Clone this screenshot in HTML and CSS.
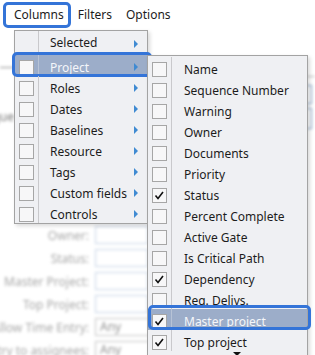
FILE: index.html
```html
<!DOCTYPE html>
<html>
<head>
    <title>Columns menu</title>
    <link rel="stylesheet" href="styles.css">
</head>
<body>
    <div class="menubar">
        <span class="menubar-item is-open">Columns</span>
        <span class="menubar-item">Filters</span>
        <span class="menubar-item">Options</span>
    </div>

    <div class="backdrop">
        <div class="backdrop-top">
            <div class="bg-left">
                <div class="bg-rule"></div>
                <div class="bg-label">Unique</div>
            </div>
            <div class="bg-right">
                <div class="bg-rule bg-rule-right"></div>
                <div class="bg-box"></div>
                <div class="bg-box bg-box-tall"></div>
            </div>
        </div>
        <div class="form">
            <div class="form-row"><label>Owner:</label><span class="field"></span></div>
            <div class="form-row"><label>Status:</label><span class="field"></span></div>
            <div class="form-row"><label>Master Project:</label><span class="field"></span></div>
            <div class="form-row"><label>Top Project:</label><span class="field"></span></div>
            <div class="form-row"><label>Allow Time Entry:</label><span class="field field-select">Any</span></div>
            <div class="form-row"><label>Restrict entry to assignees:</label><span class="field field-select">Any</span></div>
        </div>
    </div>

    <div class="menu menu-main">
        <div class="menu-row menu-row-first">
            <span class="menu-gutter"></span>
            <span class="menu-label">Selected</span>
            <span class="menu-arrow"></span>
        </div>
        <div class="menu-row is-active">
            <span class="menu-gutter"><span class="check"></span></span>
            <span class="menu-label">Project</span>
            <span class="menu-arrow"></span>
        </div>
        <div class="menu-row">
            <span class="menu-gutter"><span class="check"></span></span>
            <span class="menu-label">Roles</span>
            <span class="menu-arrow"></span>
        </div>
        <div class="menu-row">
            <span class="menu-gutter"><span class="check"></span></span>
            <span class="menu-label">Dates</span>
            <span class="menu-arrow"></span>
        </div>
        <div class="menu-row">
            <span class="menu-gutter"><span class="check"></span></span>
            <span class="menu-label">Baselines</span>
            <span class="menu-arrow"></span>
        </div>
        <div class="menu-row">
            <span class="menu-gutter"><span class="check"></span></span>
            <span class="menu-label">Resource</span>
            <span class="menu-arrow"></span>
        </div>
        <div class="menu-row">
            <span class="menu-gutter"><span class="check"></span></span>
            <span class="menu-label">Tags</span>
            <span class="menu-arrow"></span>
        </div>
        <div class="menu-row">
            <span class="menu-gutter"><span class="check"></span></span>
            <span class="menu-label">Custom fields</span>
            <span class="menu-arrow"></span>
        </div>
        <div class="menu-row">
            <span class="menu-gutter"><span class="check"></span></span>
            <span class="menu-label">Controls</span>
            <span class="menu-arrow"></span>
        </div>
    </div>

    <div class="menu menu-sub">
        <div class="menu-row">
            <span class="menu-gutter"><span class="check"></span></span>
            <span class="menu-label">Name</span>
        </div>
        <div class="menu-row">
            <span class="menu-gutter"><span class="check"></span></span>
            <span class="menu-label">Sequence Number</span>
        </div>
        <div class="menu-row">
            <span class="menu-gutter"><span class="check"></span></span>
            <span class="menu-label">Warning</span>
        </div>
        <div class="menu-row">
            <span class="menu-gutter"><span class="check"></span></span>
            <span class="menu-label">Owner</span>
        </div>
        <div class="menu-row">
            <span class="menu-gutter"><span class="check"></span></span>
            <span class="menu-label">Documents</span>
        </div>
        <div class="menu-row">
            <span class="menu-gutter"><span class="check"></span></span>
            <span class="menu-label">Priority</span>
        </div>
        <div class="menu-row">
            <span class="menu-gutter"><span class="check is-checked"><svg viewBox="0 0 13 13"><polyline points="2.5,6.5 5,9.5 10,3"/></svg></span></span>
            <span class="menu-label">Status</span>
        </div>
        <div class="menu-row">
            <span class="menu-gutter"><span class="check"></span></span>
            <span class="menu-label">Percent Complete</span>
        </div>
        <div class="menu-row">
            <span class="menu-gutter"><span class="check"></span></span>
            <span class="menu-label">Active Gate</span>
        </div>
        <div class="menu-row">
            <span class="menu-gutter"><span class="check"></span></span>
            <span class="menu-label">Is Critical Path</span>
        </div>
        <div class="menu-row">
            <span class="menu-gutter"><span class="check is-checked"><svg viewBox="0 0 13 13"><polyline points="2.5,6.5 5,9.5 10,3"/></svg></span></span>
            <span class="menu-label">Dependency</span>
        </div>
        <div class="menu-row">
            <span class="menu-gutter"><span class="check"></span></span>
            <span class="menu-label">Req. Delivs.</span>
        </div>
        <div class="menu-row is-active">
            <span class="menu-gutter"><span class="check is-checked"><svg viewBox="0 0 13 13"><polyline points="2.5,6.5 5,9.5 10,3"/></svg></span></span>
            <span class="menu-label">Master project</span>
        </div>
        <div class="menu-row">
            <span class="menu-gutter"><span class="check is-checked"><svg viewBox="0 0 13 13"><polyline points="2.5,6.5 5,9.5 10,3"/></svg></span></span>
            <span class="menu-label">Top project</span>
        </div>
        <div class="menu-scroll"><span class="scroll-arrow"></span></div>
    </div>
</body>
</html>
```

FILE: styles.css
```css
body {
    margin: 0;
    height: 355px;
    overflow: hidden;
    position: relative;
    font-family: "Noto Sans", "Open Sans", sans-serif;
    font-size: 12px;
    color: #1c1c1c;
    background: #fff;
}

/* top menu bar */
.menubar {
    display: flex;
    height: 28px;
    padding: 2px 0 0 3px;
    box-sizing: border-box;
}
.menubar-item {
    padding: 0 4px;
    border: 3px solid transparent;
    border-radius: 5px;
    line-height: 19px;
}
.menubar-item.is-open {
    padding-left: 8px;
    border-color: #3474d8;
}

/* blurred form behind the menus */
.backdrop {
    filter: blur(1.4px);
    color: #a8a8a8;
}
.backdrop-top {
    display: flex;
    justify-content: space-between;
    height: 198px;
}
.bg-left {
    width: 14px;
}
.bg-rule {
    height: 1px;
    margin-top: 39px;
    background: #8c8c8c;
}
.bg-label {
    display: flex;
    justify-content: flex-end;
    margin-top: 40px;
    color: #777;
    white-space: nowrap;
}
.bg-right {
    width: 15px;
}
.bg-rule-right {
    margin-top: 48px;
    background: #b5b5b5;
}
.bg-box {
    width: 10px;
    height: 17px;
    margin-top: 8px;
    border: 1px solid #7f9fc4;
}
.bg-box-tall {
    height: 19px;
    margin-top: 4px;
}
.form {
    display: flex;
    flex-direction: column;
    gap: 5px;
}
.form-row {
    display: flex;
    align-items: center;
    height: 18px;
}
.form-row label {
    display: flex;
    justify-content: flex-end;
    width: 89px;
    margin-right: 6px;
    white-space: nowrap;
}
.field {
    width: 51px;
    height: 16px;
    border: 1px solid #c6d4e6;
    background: #fff;
}
.field-select {
    border-color: #c4c4c4;
    padding-left: 4px;
    line-height: 16px;
    color: #909090;
}

/* drop-down menus */
.menu {
    position: absolute;
    background: #eff0f3;
    border: 1px solid #a3a3a3;
    box-shadow: 2px 2px 4px rgba(0, 0, 0, 0.15);
}
.menu-main {
    left: 14px;
    top: 30px;
    width: 132px;
    height: 192px;
}
.menu-sub {
    left: 147px;
    top: 55px;
    width: 159px;
    padding-top: 1px;
}
.menu-row {
    position: relative;
    display: flex;
    height: 21px;
}
.menu-row-first {
    height: 24px;
}
.menu-row-first .menu-label {
    padding-top: 2px;
}
.menu-gutter {
    width: 24px;
    padding: 5px 0 0 4px;
    box-sizing: border-box;
    border-right: 1px solid #c9c9cc;
}
.menu-label {
    flex: 1;
    padding: 3px 0 0 11px;
    line-height: 19px;
    white-space: nowrap;
}
.menu-sub .menu-label {
    padding-left: 12px;
}
.menu-arrow {
    width: 0;
    height: 0;
    margin: 8px 9px 0 0;
    border-left: 4px solid #3f8ad2;
    border-top: 4px solid transparent;
    border-bottom: 4px solid transparent;
}
.menu-row-first .menu-arrow {
    margin-top: 9px;
}
.check {
    display: block;
    width: 13px;
    height: 13px;
    border: 1px solid #a6a6a6;
    background: #f7f7f8;
}
.check svg {
    display: block;
    width: 13px;
    height: 13px;
    fill: none;
    stroke: #111;
    stroke-width: 1.6;
}
.menu-row.is-active {
    background: #9cadc9;
    color: #f4f6fa;
}
.menu-row.is-active .menu-gutter {
    border-right-color: #b7c3d6;
}
.menu-row.is-active::after {
    content: "";
    position: absolute;
    top: -3px;
    left: -3px;
    right: -5px;
    height: 25px;
    box-sizing: border-box;
    border: 3px solid #3474d8;
    border-radius: 5px;
}
.menu-sub .menu-row.is-active::after {
    left: 0;
    right: -4px;
    top: -4px;
}
.menu-scroll {
    height: 12px;
    padding: 1px 0 0 85px;
}
.scroll-arrow {
    display: block;
    width: 0;
    height: 0;
    border-top: 4px solid #111;
    border-left: 4px solid transparent;
    border-right: 4px solid transparent;
}
```
